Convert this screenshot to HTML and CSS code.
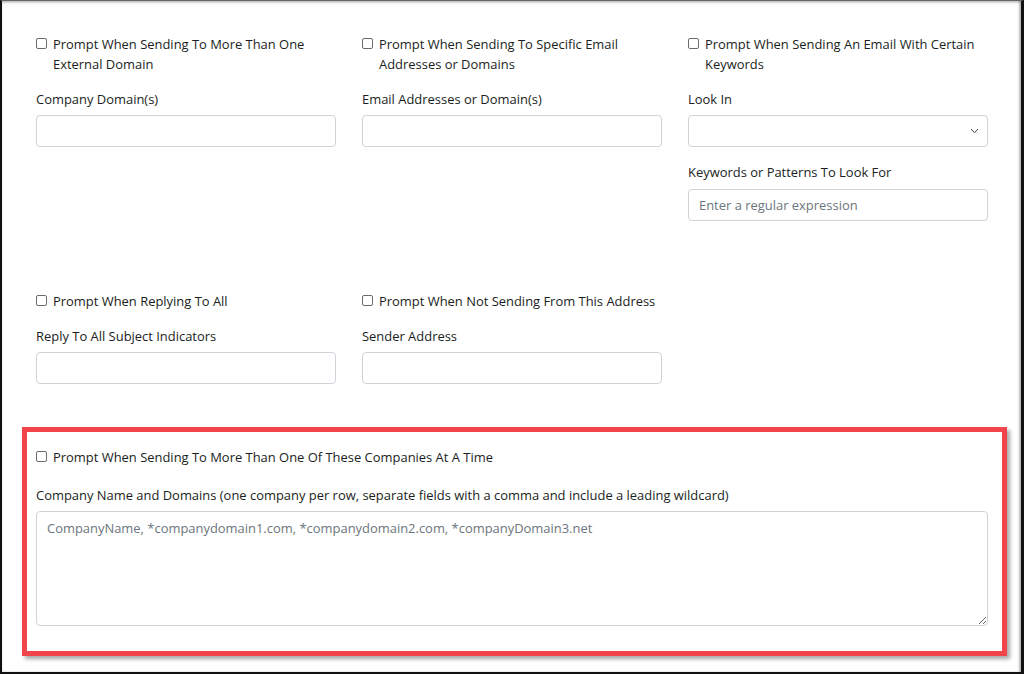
FILE: index.html
```html
<!DOCTYPE html>
<html lang="en">
<head>
<meta charset="utf-8">
<title>Prompt settings</title>
<link rel="stylesheet" href="styles.css">
</head>
<body>
<div class="frame">
  <div class="grid row-one">
    <div class="col">
      <label class="check"><span class="box"></span><span class="check-text">Prompt When Sending To More Than One External Domain</span></label>
      <div class="label">Company Domain(s)</div>
      <input class="field" type="text">
    </div>
    <div class="col">
      <label class="check"><span class="box"></span><span class="check-text">Prompt When Sending To Specific Email Addresses or Domains</span></label>
      <div class="label">Email Addresses or Domain(s)</div>
      <input class="field" type="text">
    </div>
    <div class="col">
      <label class="check"><span class="box"></span><span class="check-text">Prompt When Sending An Email With Certain Keywords</span></label>
      <div class="label">Look In</div>
      <div class="select field">
        <svg class="chev" width="9" height="6" viewBox="0 0 9 6"><path d="M1 1.2 L4.5 4.6 L8 1.2" fill="none" stroke="#343a40" stroke-width="1"/></svg>
      </div>
      <div class="label gap-top">Keywords or Patterns To Look For</div>
      <input class="field" type="text" placeholder="Enter a regular expression">
    </div>
  </div>
  <div class="grid row-two">
    <div class="col">
      <label class="check"><span class="box"></span><span class="check-text">Prompt When Replying To All</span></label>
      <div class="label">Reply To All Subject Indicators</div>
      <input class="field" type="text">
    </div>
    <div class="col">
      <label class="check"><span class="box"></span><span class="check-text">Prompt When Not Sending From This Address</span></label>
      <div class="label">Sender Address</div>
      <input class="field" type="text">
    </div>
    <div class="col"></div>
  </div>
  <div class="highlight">
    <label class="check"><span class="box"></span><span class="check-text">Prompt When Sending To More Than One Of These Companies At A Time</span></label>
    <div class="label wide-label">Company Name and Domains (one company per row, separate fields with a comma and include a leading wildcard)</div>
    <textarea class="area" placeholder="CompanyName, *companydomain1.com, *companydomain2.com, *companyDomain3.net"></textarea>
  </div>
</div>
</body>
</html>
```

FILE: styles.css
```css
* { box-sizing: border-box; }
html, body { margin: 0; padding: 0; background: #fff; }
body {
  font-family: "Open Sans", "Noto Sans", "Liberation Sans", sans-serif;
  font-size: 12.95px;
  line-height: 20px;
  color: #1a1e22;
}
.frame {
  width: 1024px;
  height: 674px;
  border-left: 2px solid #111;
  border-right: 3px solid #111;
  border-bottom: 2px solid #111;
  border-top: 1px solid #666;
  box-shadow: inset 0 2px 2px rgba(0,0,0,0.18), inset -2px 0 2px rgba(0,0,0,0.25);
  padding: 33px 0 0 34px;
  overflow: hidden;
}
.grid {
  display: grid;
  grid-template-columns: 300px 300px 300px;
  column-gap: 26px;
}
.row-two { margin-top: 70px; }
.col { display: flex; flex-direction: column; }
.check {
  display: flex;
  align-items: flex-start;
  gap: 6px;
}
.box {
  flex: none;
  width: 11px;
  height: 11px;
  margin-top: 4px;
  border: 1px solid #6b6b6b;
  border-radius: 2px;
  background: #fff;
}
.check-text { display: block; }
.label {
  margin-top: 15px;
  margin-bottom: 6px;
}
.gap-top { margin-top: 15px; margin-bottom: 7px; }
.field {
  display: block;
  width: 300px;
  height: 32px;
  border: 1px solid #ced4da;
  border-radius: 4px;
  background: #fff;
  padding: 0 10px;
  font: inherit;
  color: #212529;
  outline: none;
}
.field::placeholder { color: #6c757d; }
.select {
  display: flex;
  align-items: center;
  justify-content: flex-end;
  padding-right: 8px;
}
.chev { display: block; }
.highlight {
  margin: 43px 0 0 -14px;
  width: 985px;
  height: 229px;
  border: 5px solid #f2444b;
  box-shadow: 3px 3px 4px rgba(0,0,0,0.35);
  padding: 15px 14px 0 9px;
}
.wide-label { margin-top: 18px; }
.area {
  display: block;
  width: 952px;
  height: 115px;
  border: 1px solid #ced4da;
  border-radius: 4px;
  padding: 6px 10px;
  font: inherit;
  color: #212529;
  resize: vertical;
  outline: none;
}
.area::placeholder { color: #6c757d; }
```
